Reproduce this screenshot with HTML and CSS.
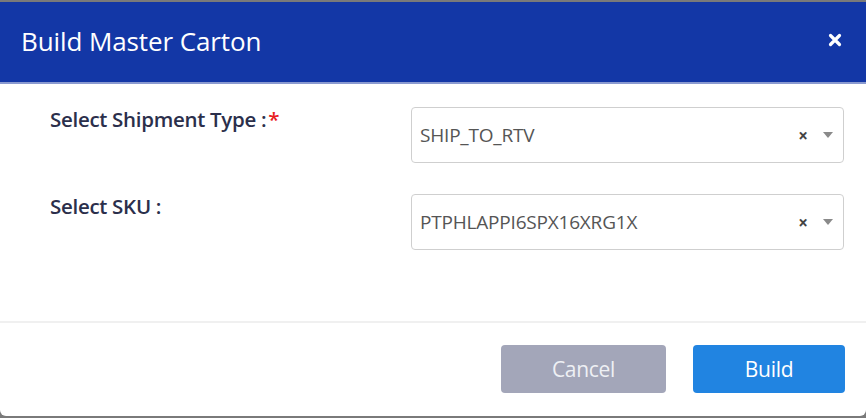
FILE: index.html
```html
<!DOCTYPE html>
<html>
<head>
<meta charset="utf-8">
<link rel="stylesheet" href="styles.css">
</head>
<body>
<div class="backdrop">
  <div class="modal">
    <div class="header">
      <div class="title">Build Master Carton</div>
      <div class="close">
        <svg width="14" height="14" viewBox="0 0 14 14"><path d="M2.5 2.5 L11.5 11.5 M11.5 2.5 L2.5 11.5" stroke="#fff" stroke-width="3.2" stroke-linecap="round"/></svg>
      </div>
    </div>
    <div class="body">
      <div class="row">
        <div class="label">Select Shipment Type :<span class="req">*</span></div>
        <div class="select">
          <span class="value">SHIP_TO_RTV</span>
          <span class="clear">×</span>
          <span class="arrow"></span>
        </div>
      </div>
      <div class="row">
        <div class="label">Select SKU :</div>
        <div class="select">
          <span class="value">PTPHLAPPI6SPX16XRG1X</span>
          <span class="clear">×</span>
          <span class="arrow"></span>
        </div>
      </div>
    </div>
    <div class="footer">
      <button class="btn cancel">Cancel</button>
      <button class="btn build">Build</button>
    </div>
  </div>
</div>
</body>
</html>
```
FILE: styles.css
```css
html, body {
  margin: 0;
  padding: 0;
}
body {
  width: 866px;
  height: 418px;
  background: #7a7a7a;
  font-family: "Open Sans", "Noto Sans", sans-serif;
  overflow: hidden;
}
.backdrop {
  padding-top: 2px;
  height: 416px;
  box-sizing: border-box;
}
.modal {
  background: #fff;
  height: 414px;
  border-radius: 0 0 6px 6px;
  display: flex;
  flex-direction: column;
  overflow: hidden;
}
.header {
  background: #1337a6;
  height: 80px;
  border-bottom: 2px solid #8a9ad0;
  display: flex;
  align-items: center;
  justify-content: space-between;
  padding: 0 24px 0 21px;
  flex-shrink: 0;
}
.title {
  color: #fff;
  font-size: 26px;
  letter-spacing: -0.1px;
  padding-bottom: 2px;
}
.close {
  display: flex;
  margin-top: -4px;
}
.body {
  height: 239px;
  border-bottom: 2px solid #f0f0f0;
  padding: 20px 22px 0 50px;
  box-sizing: border-box;
  display: flex;
  flex-direction: column;
  gap: 28px;
}
.row {
  display: flex;
  align-items: flex-start;
}
.label {
  width: 361px;
  color: #2b2f4b;
  font-size: 20.5px;
  font-weight: 600;
  letter-spacing: -0.3px;
  line-height: 28px;
  padding-top: 1px;
}
.req {
  color: #e8201f;
  margin-left: 2px;
}
.select {
  flex: 1;
  height: 56px;
  border: 1px solid #cfcfcf;
  border-radius: 4px;
  box-sizing: border-box;
  display: flex;
  align-items: center;
  padding: 0 10px 0 8px;
  color: #555;
  margin-top: 3px;
}
.value {
  flex: 1;
  font-size: 19px;
  letter-spacing: -0.2px;
}
.clear {
  font-size: 17px;
  font-weight: 700;
  color: #444;
  margin-right: 15px;
  line-height: 1;
}
.arrow {
  width: 0;
  height: 0;
  border-left: 5px solid transparent;
  border-right: 5px solid transparent;
  border-top: 6px solid #8a8a8a;
}
.footer {
  flex: 1;
  display: flex;
  justify-content: flex-end;
  align-items: flex-start;
  padding: 22px 21px 0 0;
  gap: 27px;
}
.btn {
  height: 48px;
  border: none;
  border-radius: 4px;
  color: #fff;
  font-family: "Open Sans", "Noto Sans", sans-serif;
  font-size: 21px;
  letter-spacing: -0.3px;
}
.cancel {
  width: 165px;
  background: #a3a6b9;
  color: #eef0f4;
}
.build {
  width: 152px;
  background: #2184e1;
}
```
